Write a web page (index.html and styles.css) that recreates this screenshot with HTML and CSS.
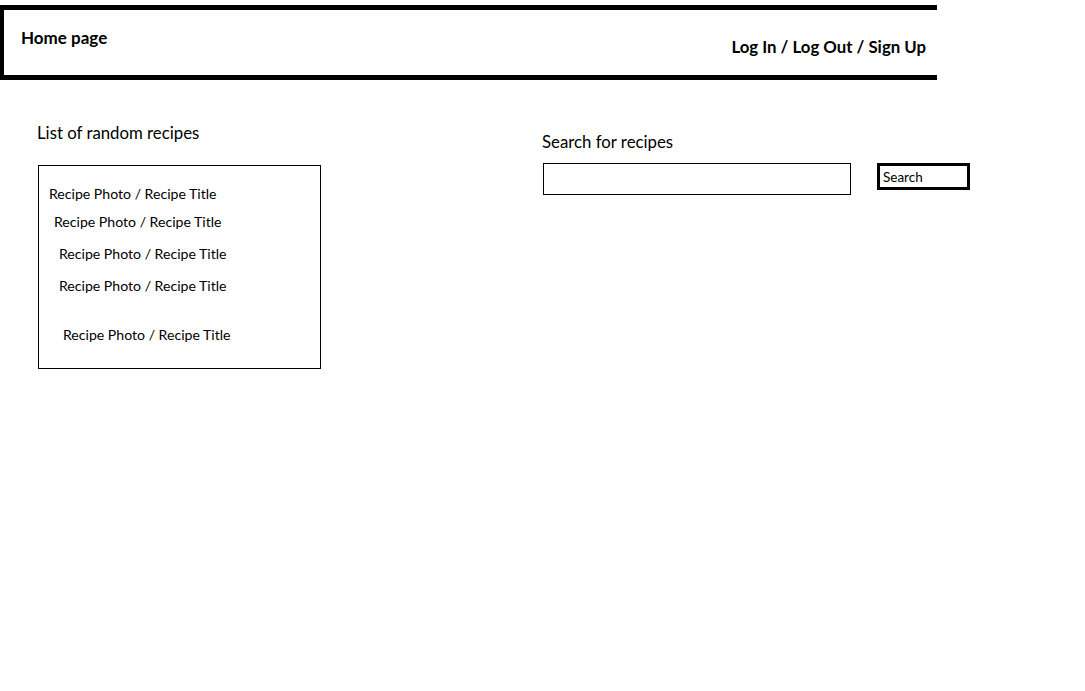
FILE: index.html
```html
<!DOCTYPE html>
<html>
<head>
<meta charset="utf-8">
<link rel="stylesheet" href="styles.css">
</head>
<body>
<header class="topbar">
  <div class="brand">Home page</div>
  <nav class="auth">Log In / Log Out / Sign Up</nav>
</header>
<main class="content">
  <section class="random">
    <h2 class="section-title">List of random recipes</h2>
    <ul class="recipe-list">
      <li class="recipe r1">Recipe Photo / Recipe Title</li>
      <li class="recipe r2">Recipe Photo / Recipe Title</li>
      <li class="recipe r3">Recipe Photo / Recipe Title</li>
      <li class="recipe r4">Recipe Photo / Recipe Title</li>
      <li class="recipe r5">Recipe Photo / Recipe Title</li>
    </ul>
  </section>
  <section class="search">
    <h2 class="section-title search-title">Search for recipes</h2>
    <div class="search-row">
      <div class="search-input"></div>
      <div class="search-btn">Search</div>
    </div>
  </section>
</main>
</body>
</html>
```
FILE: styles.css
```css
* { box-sizing: border-box; }
html, body { margin: 0; padding: 0; background: #fff; }
body { font-family: "Lato", "Open Sans", sans-serif; color: #000; }

.topbar {
  margin-top: 5px;
  width: 937px;
  height: 75px;
  border-top: 5px solid #000;
  border-left: 4px solid #000;
  border-bottom: 5px solid #000;
  display: flex;
  justify-content: space-between;
  padding: 0 11px 0 17px;
}
.brand {
  font-weight: 700;
  font-size: 17px;
  margin-top: 18px;
  line-height: 20px;
}
.auth {
  font-weight: 700;
  font-size: 16.8px;
  margin-top: 27px;
  line-height: 20px;
}

.content {
  display: flex;
  padding-left: 37px;
}
.random { width: 505px; }
.section-title {
  font-weight: 400;
  font-size: 16.8px;
  line-height: 20px;
  margin: 43px 0 0 0;
}
.recipe-list {
  list-style: none;
  margin: 22px 0 0 1px;
  padding: 19px 0 20px 0;
  width: 283px;
  height: 204px;
  border: 1px solid #000;
}
.recipe {
  font-size: 14.1px;
  line-height: 18px;
}
.r1 { padding-left: 10px; }
.r2 { padding-left: 15px; margin-top: 10px; }
.r3 { padding-left: 20px; margin-top: 14px; }
.r4 { padding-left: 20px; margin-top: 14px; }
.r5 { padding-left: 24px; margin-top: 31px; }

.search-title { margin-top: 52px; }
.search-row {
  display: flex;
  align-items: flex-start;
  margin-top: 11px;
  margin-left: 1px;
}
.search-input {
  width: 308px;
  height: 32px;
  border: 1px solid #000;
}
.search-btn {
  margin-left: 26px;
  width: 93px;
  height: 27px;
  border: 3px solid #000;
  font-size: 13.5px;
  line-height: 23px;
  padding-left: 3px;
}
```
